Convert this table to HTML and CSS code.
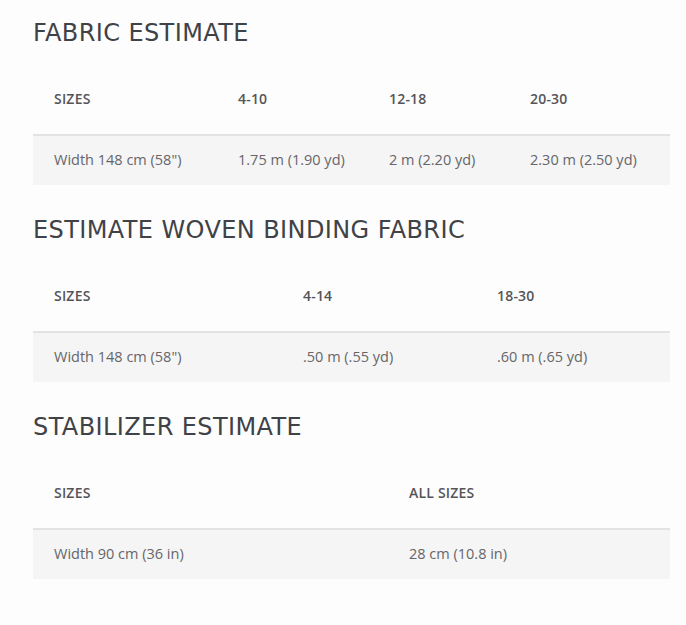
FILE: index.html
```html
<!DOCTYPE html>
<html>
<head>
<meta charset="utf-8">
<link rel="stylesheet" href="styles.css">
</head>
<body>
<div class="page">
  <section class="block">
    <h2 class="title">FABRIC ESTIMATE</h2>
    <table class="est">
      <colgroup><col style="width:184px"><col style="width:151px"><col style="width:141px"><col></colgroup>
      <thead><tr><th>SIZES</th><th>4-10</th><th>12-18</th><th>20-30</th></tr></thead>
      <tbody><tr><td>Width 148 cm (58")</td><td>1.75 m (1.90 yd)</td><td>2 m (2.20 yd)</td><td>2.30 m (2.50 yd)</td></tr></tbody>
    </table>
  </section>
  <section class="block">
    <h2 class="title">ESTIMATE WOVEN BINDING FABRIC</h2>
    <table class="est">
      <colgroup><col style="width:249px"><col style="width:194px"><col></colgroup>
      <thead><tr><th>SIZES</th><th>4-14</th><th>18-30</th></tr></thead>
      <tbody><tr><td>Width 148 cm (58")</td><td>.50 m (.55 yd)</td><td>.60 m (.65 yd)</td></tr></tbody>
    </table>
  </section>
  <section class="block">
    <h2 class="title">STABILIZER ESTIMATE</h2>
    <table class="est">
      <colgroup><col style="width:355px"><col></colgroup>
      <thead><tr><th>SIZES</th><th>ALL SIZES</th></tr></thead>
      <tbody><tr><td>Width 90 cm (36 in)</td><td>28 cm (10.8 in)</td></tr></tbody>
    </table>
  </section>
</div>
</body>
</html>
```
FILE: styles.css
```css
html, body {
  margin: 0;
  padding: 0;
  background: #fdfdfd;
}
.page {
  padding: 18px 0 0 33px;
  width: 637px;
}
.block {
  margin-bottom: 30px;
}
.title {
  margin: 0 0 16px 0;
  font-family: "DejaVu Sans", sans-serif;
  font-weight: 400;
  font-size: 24px;
  line-height: 30px;
  color: #3f4247;
  letter-spacing: 0.4px;
}
.est {
  width: 637px;
  border-collapse: collapse;
  table-layout: fixed;
  font-family: "Open Sans", sans-serif;
}
.est th {
  text-align: left;
  font-weight: 600;
  font-size: 14px;
  color: #555559;
  line-height: 22px;
  padding: 24px 0 24px 21px;
  border-bottom: 2px solid #e3e3e3;
  letter-spacing: 0.2px;
}
.est td {
  text-align: left;
  font-size: 14.5px;
  color: #66666a;
  line-height: 20px;
  padding: 14px 0 15px 21px;
  background: #f5f5f5;
}
```
